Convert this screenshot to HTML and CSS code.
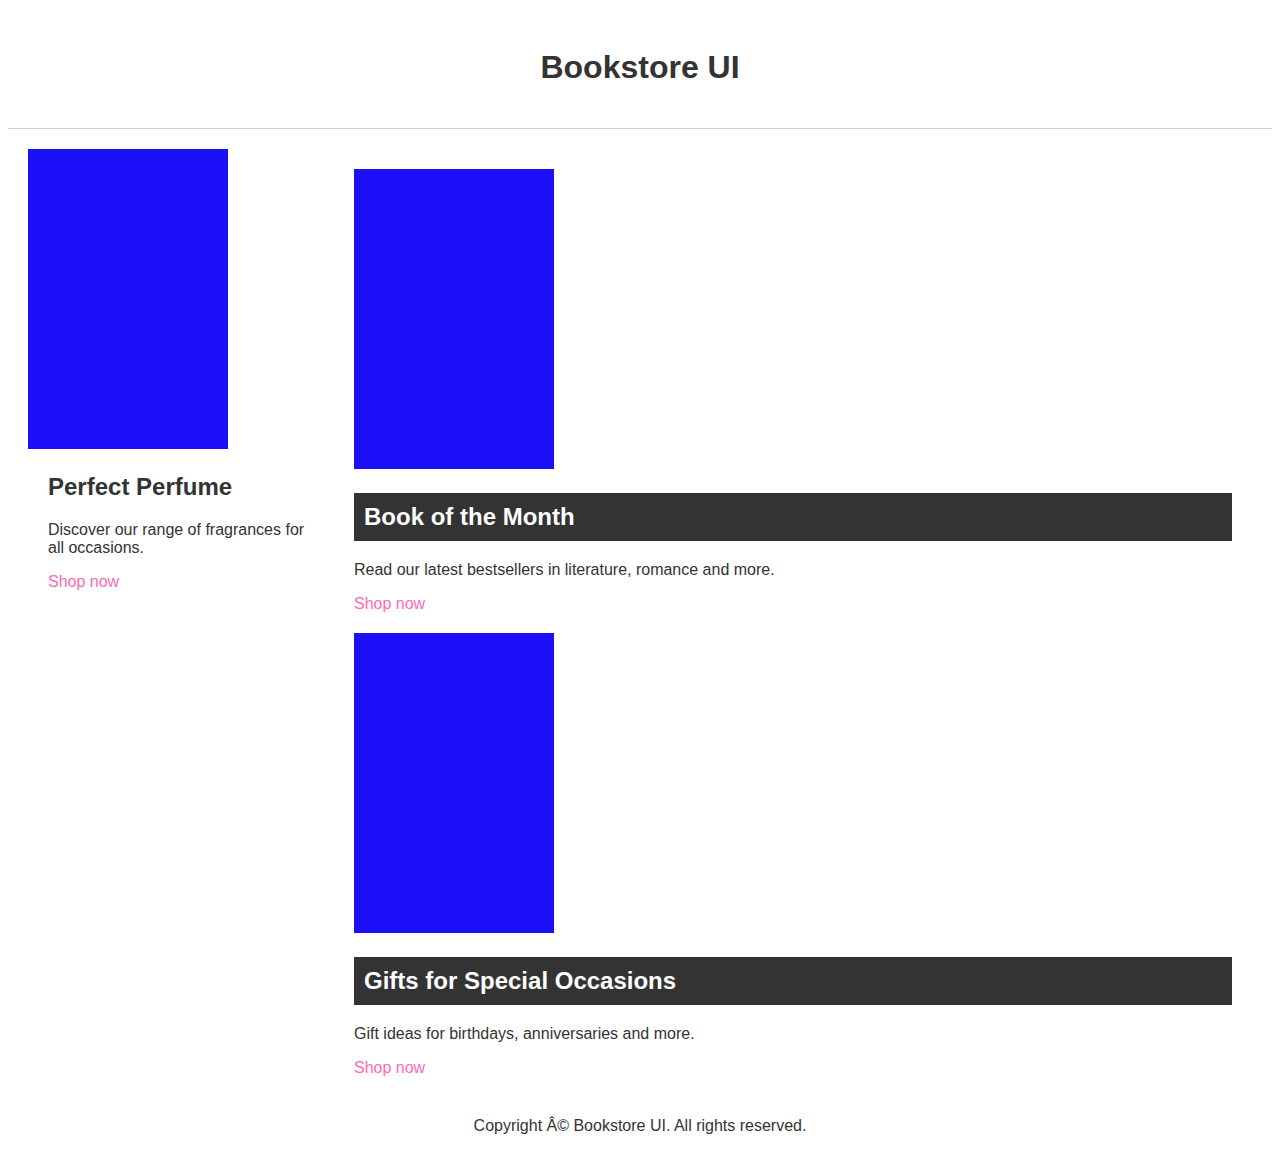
FILE: index.html
```html
<!DOCTYPE html>
<html lang="en">
<head>
<meta charset="utf-8">
<title>Bookstore UI</title>
<link rel="stylesheet" href="styles.css">
</head>
<body>
<header class="site-header">
  <h1 class="site-title">Bookstore UI</h1>
</header>
<main class="layout">
  <aside class="sidebar">
    <div class="feature">
      <div class="cover-wrap"><div class="cover"></div></div>
      <div class="feature-body">
        <h2 class="feature-title">Perfect Perfume</h2>
        <p class="text">Discover our range of fragrances for all occasions.</p>
        <a class="shop-link" href="#">Shop now</a>
      </div>
    </div>
  </aside>
  <section class="content">
    <article class="promo">
      <div class="cover-wrap"><div class="cover"></div></div>
      <h2 class="promo-title">Book of the Month</h2>
      <p class="text">Read our latest bestsellers in literature, romance and more.</p>
      <a class="shop-link" href="#">Shop now</a>
    </article>
    <article class="promo">
      <div class="cover-wrap"><div class="cover"></div></div>
      <h2 class="promo-title">Gifts for Special Occasions</h2>
      <p class="text">Gift ideas for birthdays, anniversaries and more.</p>
      <a class="shop-link" href="#">Shop now</a>
    </article>
  </section>
</main>
<footer class="site-footer">
  <div class="copyright">Copyright Â© Bookstore UI. All rights reserved.</div>
</footer>
</body>
</html>
```

FILE: styles.css
```css
body {
  margin: 8px;
  font-family: "Liberation Sans", Arial, sans-serif;
  font-size: 16px;
  color: #333;
  background: #fff;
}

.site-header {
  padding: 20px;
  text-align: center;
  border-bottom: 1px solid #ccc;
}

.site-title {
  font-size: 32px;
  font-weight: bold;
  margin: 21.44px 0;
}

.layout {
  display: flex;
  padding: 20px 20px 20px;
}

.sidebar {
  flex: 0 0 306px;
}

.content {
  flex: 1 1 auto;
  padding: 0 20px;
}

.cover-wrap {
  line-height: normal;
}

.cover {
  display: inline-block;
  width: 200px;
  height: 300px;
  background: #1c10f8;
  vertical-align: baseline;
}

.feature-body {
  padding: 0 20px;
}

.feature-title {
  font-size: 24px;
  font-weight: bold;
  margin: 19.92px 0 20px;
}

.promo {
  margin: 20px 0;
}

.promo-title {
  font-size: 24px;
  font-weight: bold;
  margin: 19.92px 0 20px;
  padding: 10px;
  background: #333;
  color: #fff;
}

.text {
  margin: 16px 0;
}

.shop-link {
  color: #ff69b4;
  text-decoration: none;
}

.site-footer {
  text-align: center;
  padding: 0 0 10px;
}
```
